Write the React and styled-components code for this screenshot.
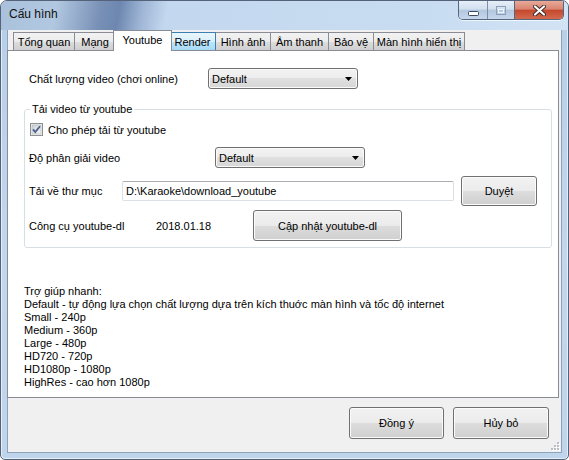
import React from 'react';
import styled, { createGlobalStyle } from 'styled-components';

const GlobalStyle = createGlobalStyle`
  html, body { margin: 0; padding: 0; background: #ffffff; }
  body {
    font-family: "Liberation Sans", Arial, sans-serif;
    font-size: 11px;
    color: #000;
  }
  * { box-sizing: border-box; }
`;

const Window = styled.div`
  width: 569px;
  height: 460px;
  display: flex;
  flex-direction: column;
  border: 1px solid #55637a;
  border-radius: 7px 7px 5px 5px;
  background: linear-gradient(180deg, #b6cee8 0%, #c2d7ee 55%, #bfd5ec 100%);
  box-shadow: inset 0 0 0 1px rgba(255, 255, 255, 0.6);
  overflow: hidden;
`;

const TitleBar = styled.div`
  height: 29px;
  flex: none;
  display: flex;
  justify-content: space-between;
  align-items: flex-start;
  background: linear-gradient(100deg,
    #a9c1dc 0px, #b2c8e1 55px, #7890b6 100px, #6d87b0 118px,
    #9db4d4 140px, #c3d8ef 165px, #c8dcf1 420px, #d2e3f4 100%);
`;

const Title = styled.div`
  padding: 6px 0 0 8px;
  font-size: 12px;
  line-height: 15px;
  color: #101010;
`;

const Caption = styled.div`
  display: flex;
  margin-right: 4px;
  height: 19px;
`;

const CaptionGroup = styled.div`
  display: flex;
  border: 1px solid #56667c;
  border-top: none;
  border-radius: ${({ $side }) => ($side === 'left' ? '0 0 0 5px' : '0 0 5px 0')};
  overflow: hidden;
  box-shadow: 0 1px 0 rgba(255, 255, 255, 0.7);
`;

const CaptionButton = styled.div`
  width: ${({ $w }) => $w}px;
  height: 18px;
  display: flex;
  align-items: center;
  justify-content: center;
  border-left: ${({ $sep }) => ($sep ? '1px solid #7d8ea5' : 'none')};
  background: ${({ $close }) =>
    $close
      ? 'linear-gradient(180deg, #e9a999 0%, #d98570 45%, #c5482e 52%, #d26a4f 100%)'
      : 'linear-gradient(180deg, #e6eef8 0%, #d2e0ef 45%, #b3c7df 52%, #c4d7ec 100%)'};
`;

const Client = styled.div`
  flex: 1;
  margin: 0 6px 6px 6px;
  background: #f0f0f0;
  border: 1px solid #8ea2bb;
  border-top: none;
  display: flex;
  flex-direction: column;
`;

const TabStrip = styled.div`
  height: 20px;
  flex: none;
  display: flex;
  align-items: flex-end;
  padding-left: 5px;
  position: relative;
  z-index: 2;
`;

const Tab = styled.div`
  width: ${({ $w, $active }) => ($active ? $w + 4 : $w)}px;
  height: ${({ $active }) => ($active ? 21 : 18)}px;
  margin-left: ${({ $first, $active }) => ($active ? -3 : $first ? 0 : -1)}px;
  margin-right: ${({ $active }) => ($active ? -2 : 0)}px;
  margin-bottom: ${({ $active }) => ($active ? -1 : 0)}px;
  position: relative;
  z-index: ${({ $active, $hover }) => ($active ? 3 : $hover ? 2 : 1)};
  display: flex;
  align-items: center;
  justify-content: center;
  padding-bottom: ${({ $active }) => ($active ? 3 : 0)}px;
  border: 1px solid ${({ $hover }) => ($hover ? '#3c7fb1' : '#898c95')};
  border-bottom: none;
  white-space: nowrap;
  background: ${({ $active, $hover }) =>
    $active
      ? '#ffffff'
      : $hover
        ? 'linear-gradient(180deg, #eaf6fd 0%, #d9f0fc 50%, #bee6fd 50%, #a7d9f5 100%)'
        : 'linear-gradient(180deg, #f2f2f2 0%, #ebebeb 50%, #dddddd 50%, #cfcfcf 100%)'};
`;

const Panel = styled.div`
  height: 348px;
  flex: none;
  margin: 0 2px 0 -1px;
  background: #ffffff;
  border: 1px solid #898c95;
  padding: 17px 6px 0 16px;
  display: flex;
  flex-direction: column;
`;

const Row = styled.div`
  display: flex;
  align-items: center;
  height: ${({ $h }) => $h}px;
  margin-top: ${({ $mt }) => $mt || 0}px;
  padding-left: ${({ $pl }) => $pl || 0}px;
`;

const Label = styled.div`
  width: ${({ $w }) => $w}px;
  flex: none;
  white-space: nowrap;
`;

const Combo = styled.div`
  width: 150px;
  height: 21px;
  display: flex;
  align-items: center;
  justify-content: space-between;
  padding: 0 5px 0 3px;
  border: 1px solid #707070;
  border-radius: 3px;
  background: linear-gradient(180deg, #f3f3f3 0%, #ececec 50%, #e0e0e0 50%, #d6d6d6 100%);
  box-shadow: inset 0 0 0 1px #fafafa;
`;

const Group = styled.fieldset`
  margin: 14px 0 0 0;
  padding: 7px 0 6px 4px;
  border: 1px solid #d5dfe5;
  border-radius: 3px;
  min-width: 0;
`;

const Legend = styled.legend`
  padding: 0 2px;
  margin-left: 1px;
  line-height: 13px;
`;

const CheckBox = styled.span`
  display: inline-flex;
  width: 13px;
  height: 13px;
  margin: 0 5px 0 1px;
`;

const TextBox = styled.div`
  width: 332px;
  height: 20px;
  flex: none;
  display: flex;
  align-items: center;
  padding-left: 3px;
  border: 1px solid #dbdfe6;
  border-top-color: #abadb3;
  border-radius: 2px;
  background: #ffffff;
`;

const Button = styled.div`
  width: ${({ $w }) => $w}px;
  height: ${({ $h }) => $h}px;
  flex: none;
  margin-left: ${({ $ml }) => $ml || 0}px;
  display: flex;
  align-items: center;
  justify-content: center;
  border: 1px solid #707070;
  border-radius: 3px;
  background: linear-gradient(180deg, #f2f2f2 0%, #ebebeb 50%, #dddddd 50%, #cfcfcf 100%);
  box-shadow: inset 0 0 0 1px #fbfbfb;
  white-space: nowrap;
`;

const Help = styled.div`
  margin-top: 37px;
  line-height: 13px;
`;

const Footer = styled.div`
  flex: 1;
  position: relative;
  display: flex;
  justify-content: flex-end;
  align-items: flex-start;
  gap: 9px;
  padding: 9px 12px 0 0;
`;

const Grip = styled.svg`
  position: absolute;
  right: 1px;
  bottom: 1px;
`;

const tabs = [
  { label: 'Tổng quan', w: 62 },
  { label: 'Mạng', w: 42 },
  { label: 'Youtube', w: 55, active: true },
  { label: 'Render', w: 47, hover: true },
  { label: 'Hình ảnh', w: 56 },
  { label: 'Âm thanh', w: 59 },
  { label: 'Bảo vệ', w: 46 },
  { label: 'Màn hình hiển thị', w: 92 },
];

const helpLines = [
  'Trợ giúp nhanh:',
  'Default - tự động lựa chọn chất lượng dựa trên kích thuớc màn hình và tốc độ internet',
  'Small - 240p',
  'Medium - 360p',
  'Large - 480p',
  'HD720 - 720p',
  'HD1080p - 1080p',
  'HighRes - cao hơn 1080p',
];

const Arrow = () => (
  <svg width="7" height="4" viewBox="0 0 7 4">
    <path d="M0 0 H7 L3.5 4 Z" fill="#000" />
  </svg>
);

const Check = () => (
  <svg width="13" height="13" viewBox="0 0 13 13">
    <defs>
      <linearGradient id="cbg" x1="0" y1="0" x2="1" y2="1">
        <stop offset="0" stopColor="#cbcfd5" />
        <stop offset="1" stopColor="#f6f6f6" />
      </linearGradient>
    </defs>
    <rect x="0.5" y="0.5" width="12" height="12" fill="#f4f4f4" stroke="#8e8f8f" />
    <rect x="2" y="2" width="9" height="9" fill="url(#cbg)" stroke="#aeb3b9" strokeWidth="0.6" />
    <path d="M3 6.3 L5.3 9 L10 3.3" fill="none" stroke="#4a5f8f" strokeWidth="1.8" />
  </svg>
);

const Combobox = ({ value }) => (
  <Combo>
    <span>{value}</span>
    <Arrow />
  </Combo>
);

const App = () => (
  <>
    <GlobalStyle />
    <Window>
      <TitleBar>
        <Title>Cấu hình</Title>
        <Caption>
          <CaptionGroup $side="left">
            <CaptionButton $w={28}>
              <svg width="11" height="5" viewBox="0 0 11 5" style={{ marginTop: 6 }}>
                <rect x="0.5" y="0.5" width="10" height="4" rx="1" fill="#fff" stroke="#3b4a60" />
              </svg>
            </CaptionButton>
            <CaptionButton $w={27} $sep>
              <svg width="10" height="9" viewBox="0 0 10 9">
                <rect x="0.5" y="0.5" width="9" height="8" fill="none" stroke="#8ea0b8" />
                <rect x="2.5" y="3.5" width="5" height="3" fill="none" stroke="#eef4fb" />
              </svg>
            </CaptionButton>
          </CaptionGroup>
          <CaptionGroup $side="right" style={{ marginLeft: -1 }}>
            <CaptionButton $w={48} $close>
              <svg width="13" height="11" viewBox="0 0 13 11">
                <path d="M2 1.5 L11 9.5 M11 1.5 L2 9.5" stroke="#3a2a2a" strokeWidth="4" strokeLinecap="round" />
                <path d="M2 1.5 L11 9.5 M11 1.5 L2 9.5" stroke="#fff" strokeWidth="2.2" strokeLinecap="round" />
              </svg>
            </CaptionButton>
          </CaptionGroup>
        </Caption>
      </TitleBar>

      <Client>
        <TabStrip>
          {tabs.map((t, i) => (
            <Tab key={t.label} $w={t.w} $first={i === 0} $active={t.active} $hover={t.hover}>
              {t.label}
            </Tab>
          ))}
        </TabStrip>

        <Panel>
          <Row $h={21} $pl={5}>
            <Label $w={179}>Chất lượng video (chơi online)</Label>
            <Combobox value="Default" />
          </Row>

          <Group>
            <Legend>Tải video từ youtube</Legend>
            <Row $h={13}>
              <CheckBox><Check /></CheckBox>
              <span>Cho phép tải từ youtube</span>
            </Row>
            <Row $h={21} $mt={11}>
              <Label $w={186}>Độ phân giải video</Label>
              <Combobox value="Default" />
            </Row>
            <Row $h={30} $mt={8}>
              <Label $w={93}>Tải về thư mục</Label>
              <TextBox>D:\Karaoke\download_youtube</TextBox>
              <Button $w={76} $h={30} $ml={7}>Duyệt</Button>
            </Row>
            <Row $h={31} $mt={4}>
              <Label $w={127}>Công cụ youtube-dl</Label>
              <Label $w={97}>2018.01.18</Label>
              <Button $w={149} $h={31}>Cập nhật youtube-dl</Button>
            </Row>
          </Group>

          <Help>
            {helpLines.map((l) => (
              <div key={l}>{l}</div>
            ))}
          </Help>
        </Panel>

        <Footer>
          <Button $w={95} $h={32}>Đồng ý</Button>
          <Button $w={96} $h={32}>Hủy bỏ</Button>
          <Grip width="11" height="11" viewBox="0 0 11 11">
            {[[8, 2], [8, 5], [5, 5], [8, 8], [5, 8], [2, 8]].map(([x, y]) => (
              <g key={`${x}-${y}`}>
                <rect x={x + 1} y={y + 1} width="2" height="2" fill="#ffffff" />
                <rect x={x} y={y} width="2" height="2" fill="#b9bec6" />
              </g>
            ))}
          </Grip>
        </Footer>
      </Client>
    </Window>
  </>
);

export default App;
